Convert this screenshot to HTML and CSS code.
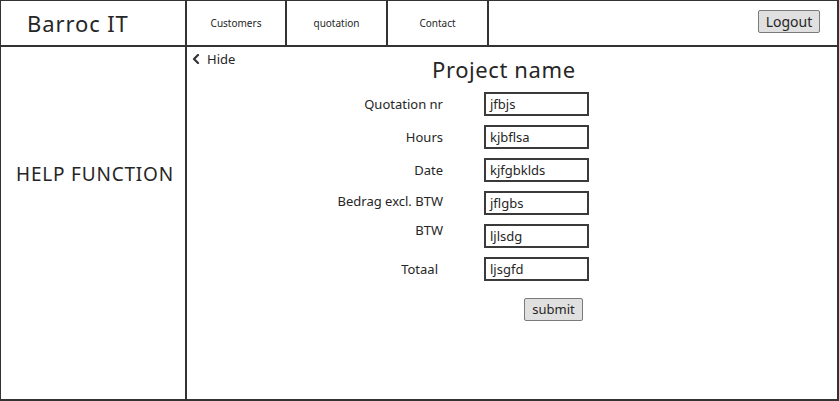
FILE: index.html
```html
<!DOCTYPE html>
<html lang="nl">
<head>
<meta charset="utf-8">
<title>Barroc IT - Project</title>
<link rel="stylesheet" href="styles.css">
</head>
<body>
<div class="frame">
  <header class="topbar">
    <div class="brand">Barroc IT</div>
    <nav class="nav">
      <a class="nav-item nav-item--customers">Customers</a>
      <a class="nav-item nav-item--quotation">quotation</a>
      <a class="nav-item nav-item--contact">Contact</a>
    </nav>
    <div class="topbar-actions"><button class="btn btn--logout" type="button">Logout</button></div>
  </header>
  <div class="body">
    <aside class="sidebar"><div class="help">HELP FUNCTION</div></aside>
    <main class="main">
      <div class="hide-toggle">
        <svg class="chevron" width="8" height="10" viewBox="0 0 8 10"><polyline points="6,1 2,5 6,9" fill="none" stroke="#333" stroke-width="2.2" stroke-linecap="round" stroke-linejoin="round"/></svg>
        <span>Hide</span>
      </div>
      <div class="content">
        <h1 class="title">Project name</h1>
        <form class="form">
          <div class="row"><label class="label">Quotation nr</label><div class="field">jfbjs</div></div>
          <div class="row"><label class="label">Hours</label><div class="field">kjbflsa</div></div>
          <div class="row"><label class="label">Date</label><div class="field">kjfgbklds</div></div>
          <div class="row"><label class="label label--up2">Bedrag excl. BTW</label><div class="field">jflgbs</div></div>
          <div class="row"><label class="label label--up6">BTW</label><div class="field">ljlsdg</div></div>
          <div class="row"><label class="label label--inset">Totaal</label><div class="field">ljsgfd</div></div>
          <div class="actions"><button class="btn btn--submit" type="button">submit</button></div>
        </form>
      </div>
    </main>
  </div>
</div>
</body>
</html>
```
FILE: styles.css
```css
html, body {
  margin: 0;
  padding: 0;
  background: #ffffff;
}

body {
  font-family: "Noto Sans", "Open Sans", sans-serif;
  color: #262626;
}

.frame {
  width: 839px;
  height: 401px;
  box-sizing: border-box;
  border: 2px solid #333333;
  border-top-width: 1px;
  border-left-width: 1px;
  display: flex;
  flex-direction: column;
}

.topbar {
  height: 46px;
  flex: none;
  box-sizing: border-box;
  border-bottom: 2px solid #333333;
  display: flex;
}

.brand {
  width: 186px;
  box-sizing: border-box;
  border-right: 2px solid #333333;
  padding-left: 26px;
  display: flex;
  align-items: center;
  font-size: 22px;
  letter-spacing: 0.9px;
}

.nav {
  display: flex;
}

.nav-item {
  box-sizing: border-box;
  border-right: 2px solid #333333;
  display: flex;
  align-items: center;
  justify-content: center;
  font-size: 10px;
  color: #262626;
  text-decoration: none;
}

.nav-item--customers { width: 100px; }
.nav-item--quotation { width: 101px; }
.nav-item--contact { width: 101px; }

.topbar-actions {
  flex: 1;
  display: flex;
  justify-content: flex-end;
  align-items: flex-start;
  padding: 9px 17px 0 0;
}

.btn {
  font-family: inherit;
  font-size: 14px;
  color: #262626;
  background: #e0e0e0;
  border: 1px solid #7a7a7a;
  border-radius: 2px;
  height: 23px;
  padding: 0;
  line-height: 1;
}

.btn--logout { width: 62px; }
.btn--submit { width: 59px; font-size: 13px; }

.body {
  flex: 1;
  display: flex;
}

.sidebar {
  width: 186px;
  flex: none;
  box-sizing: border-box;
  border-right: 2px solid #333333;
  padding-top: 115px;
}

.help {
  text-align: center;
  font-size: 19px;
  line-height: 24px;
  letter-spacing: 0.8px;
  padding-left: 4px;
}

.main {
  flex: 1;
  display: flex;
}

.hide-toggle {
  width: 145px;
  flex: none;
  box-sizing: border-box;
  padding: 3px 0 0 5px;
  display: flex;
  align-items: flex-start;
  gap: 7px;
  font-size: 13px;
  line-height: 18px;
}

.chevron {
  margin-top: 4px;
}

.content {
  display: flex;
  flex-direction: column;
}

.title {
  margin: 9px 0 0 100px;
  font-size: 22px;
  font-weight: normal;
  line-height: 26px;
  letter-spacing: 0.6px;
}

.form {
  margin-top: 10px;
  display: flex;
  flex-direction: column;
  gap: 9px;
}

.row {
  display: grid;
  grid-template-columns: 111px 105px;
  grid-template-rows: 24px;
  column-gap: 41px;
}

.label {
  align-self: center;
  text-align: right;
  font-size: 13px;
  line-height: 18px;
}

.label--up2 { margin-top: -4px; }
.label--up6 { margin-top: -12px; }
.label--inset { padding-right: 5px; }

.field {
  box-sizing: border-box;
  border: 2px solid #3a3a3a;
  padding-left: 4px;
  display: flex;
  align-items: center;
  font-size: 13px;
}

.actions {
  margin-top: 7px;
  padding-left: 192px;
}
```
